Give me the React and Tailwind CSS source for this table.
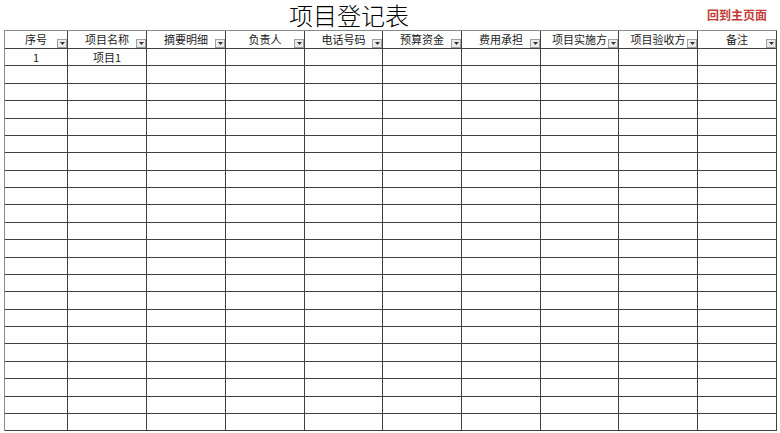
const columns = ['序号', '项目名称', '摘要明细', '负责人', '电话号码', '预算资金', '费用承担', '项目实施方', '项目验收方', '备注'];

const widths = ['w-[63px]', 'w-[79px]', 'w-[79px]', 'w-[79px]', 'w-[78px]', 'w-[79px]', 'w-[79px]', 'w-[78px]', 'w-[79px]', 'w-[79px]'];

// высоты строк подобраны по скриншоту (17/18 чередуются)
const rowHeights = [17, 18, 17, 18, 17, 17, 18, 17, 17, 18, 17, 18, 17, 17, 18, 17, 17, 18, 17, 18, 17, 17];

const rows = rowHeights.map((h, i) => ({
  h,
  cells: i === 0 ? ['1', '项目1'] : [],
}));

function FilterButton() {
  return (
    <span className="absolute right-0 bottom-0 w-[10px] h-[9px] bg-[#ececec] border border-[#a0a0a0] flex items-center justify-center">
      <svg width="5" height="3" viewBox="0 0 5 3">
        <path d="M0 0 L5 0 L2.5 3 Z" fill="#333" />
      </svg>
    </span>
  );
}

export default function App() {
  return (
    <div
      className="w-[780px] h-[433px] bg-white text-[#1a1a1a]"
      style={{ fontFamily: '"Noto Sans CJK SC", "Noto Sans", sans-serif' }}
    >
      <div className="h-[30px] flex items-start">
        <h1 className="ml-[289px] mt-[2px] text-[24px] leading-[26px] font-light text-black">项目登记表</h1>
        <a className="ml-auto mr-[13px] mt-[8px] text-[12px] font-bold text-[#c23a35] leading-[13px]">回到主页面</a>
      </div>

      <div className="ml-[4px] w-[773px] border-l border-t border-[#8a8a8a]">
        {/* Шапка таблицы */}
        <div className="flex h-[18px]">
          {columns.map((c, i) => (
            <div
              key={c}
              className={`${widths[i]} relative shrink-0 h-full border-r border-b border-[#404040] flex items-center justify-center text-[11px] leading-none`}
            >
              <span>{c}</span>
              <FilterButton />
            </div>
          ))}
        </div>

        {rows.map((r, ri) => (
          <div key={ri} className={`flex ${r.h === 18 ? 'h-[18px]' : 'h-[17px]'}`}>
            {columns.map((c, i) => (
              <div
                key={c}
                className={`${widths[i]} shrink-0 h-full border-r border-b border-[#404040] flex items-center justify-center text-[11px] leading-none`}
              >
                {r.cells[i] || ''}
              </div>
            ))}
          </div>
        ))}
      </div>
    </div>
  );
}
